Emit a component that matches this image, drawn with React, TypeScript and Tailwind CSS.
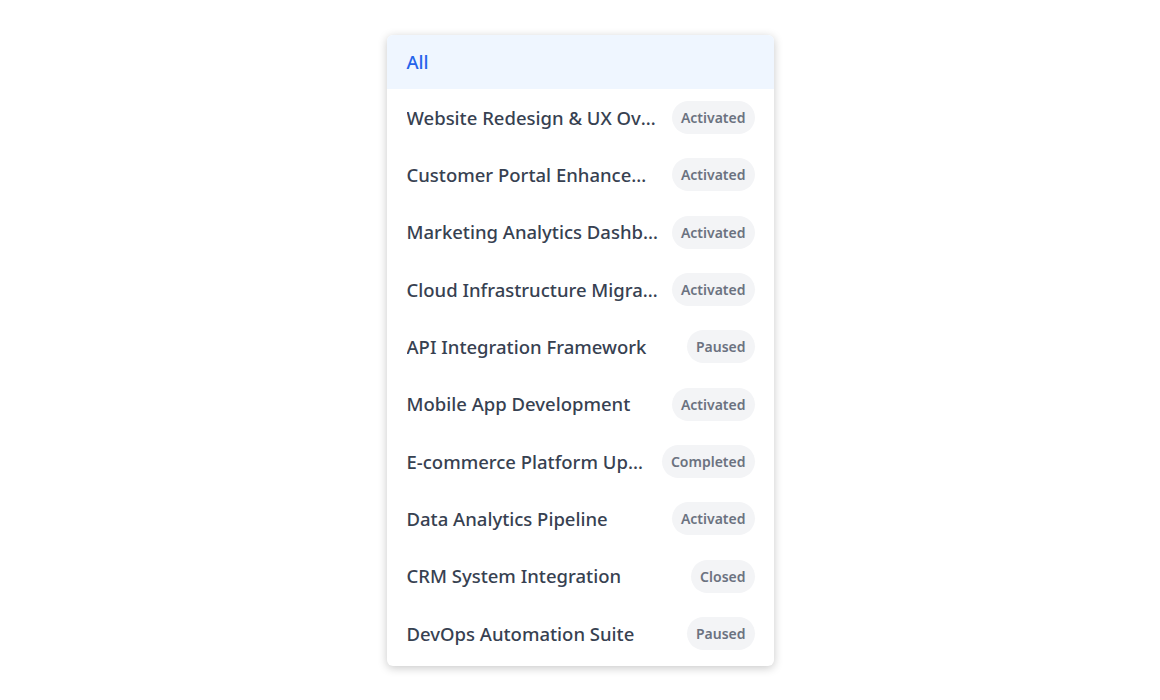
const projects: { name: string; status: string }[] = [
  { name: 'Website Redesign & UX Overhaul', status: 'Activated' },
  { name: 'Customer Portal Enhancements', status: 'Activated' },
  { name: 'Marketing Analytics Dashboard', status: 'Activated' },
  { name: 'Cloud Infrastructure Migration', status: 'Activated' },
  { name: 'API Integration Framework', status: 'Paused' },
  { name: 'Mobile App Development', status: 'Activated' },
  { name: 'E-commerce Platform Upgrade', status: 'Completed' },
  { name: 'Data Analytics Pipeline', status: 'Activated' },
  { name: 'CRM System Integration', status: 'Closed' },
  { name: 'DevOps Automation Suite', status: 'Paused' },
];

export default function App() {
  return (
    <div className="min-h-screen bg-white flex justify-center pt-[35px] font-['Noto_Sans',sans-serif]">
      <div className="w-[387px] h-fit bg-white rounded-md shadow-[0_2px_10px_rgba(0,0,0,0.22)] overflow-hidden pb-[4px]">
        <div className="h-[54px] flex items-center px-5 bg-[#eff6ff] text-[#2563eb] text-[18.5px] font-medium">
          All
        </div>
        {projects.map((p) => (
          <div key={p.name} className="h-[57.33px] flex items-center gap-3 pl-5 pr-[19px]">
            <span className="flex-1 min-w-0 truncate text-[18.5px] font-medium text-[#374151]">
              {p.name}
            </span>
            <span className="shrink-0 h-[33px] flex items-center px-[9px] rounded-full bg-[#f3f4f6] text-[14px] font-semibold text-[#6b7280]">
              {p.status}
            </span>
          </div>
        ))}
      </div>
    </div>
  );
}
